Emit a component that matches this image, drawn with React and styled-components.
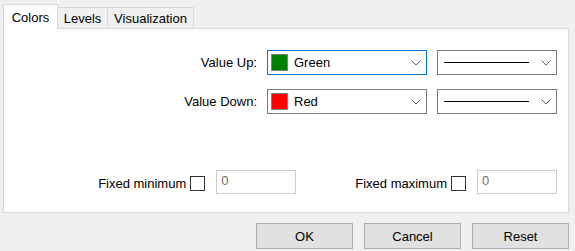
import React from "react";
import styled, { createGlobalStyle } from "styled-components";

const GlobalStyle = createGlobalStyle`
  body {
    margin: 0;
    background: #f0f0f0;
    font-family: "Liberation Sans", Arial, sans-serif;
    font-size: 13px;
    color: #000;
  }
`;

const Window = styled.div`
  width: 575px;
  height: 251px;
  box-sizing: border-box;
  padding: 4px 6px 0 3px;
  display: flex;
  flex-direction: column;
`;

const TabStrip = styled.div`
  display: flex;
  align-items: flex-end;
  height: 25px;
  margin-bottom: -1px;
`;

const Tab = styled.div`
  position: relative;
  width: ${(p) => p.$w}px;
  height: ${(p) => (p.$active ? 25 : 21)}px;
  margin-bottom: ${(p) => (p.$active ? 0 : 1)}px;
  margin-left: ${(p) => (p.$first ? 0 : -1)}px;
  box-sizing: border-box;
  border: 1px solid #d9d9d9;
  border-bottom: none;
  background: ${(p) => (p.$active ? "#fff" : "#f0f0f0")};
  z-index: ${(p) => (p.$active ? 1 : 0)};
  display: flex;
  justify-content: center;
  align-items: center;
  padding-top: ${(p) => (p.$active ? 0 : 1)}px;
`;

const Panel = styled.div`
  height: 185px;
  box-sizing: border-box;
  border: 1px solid #d9d9d9;
  background: #fff;
  padding: 21px 11px 18px 0;
  display: flex;
  flex-direction: column;
  justify-content: space-between;
`;

const ValueGrid = styled.div`
  display: grid;
  grid-template-columns: 1fr 160px 120px;
  grid-auto-rows: 25px;
  column-gap: 10px;
  row-gap: 14px;
  align-items: center;
`;

const Label = styled.div`
  text-align: right;
`;

const Combo = styled.div`
  height: 25px;
  box-sizing: border-box;
  border: 1px solid ${(p) => (p.$focused ? "#0078d7" : "#7a7a7a")};
  display: flex;
  align-items: center;
  padding: 0 5px 0 3px;
`;

const Swatch = styled.span`
  width: 17px;
  height: 17px;
  box-sizing: border-box;
  border: 1px solid #828282;
  background: ${(p) => p.$color};
  margin-right: 6px;
`;

const ComboText = styled.span`
  flex: 1;
`;

const LineSample = styled.span`
  flex: 1;
  height: 1px;
  background: #000;
  margin: 0 12px 0 3px;
`;

const Chevron = () => (
  <svg width="10" height="6" viewBox="0 0 10 6">
    <path d="M0.5 0.5 L5 5 L9.5 0.5" fill="none" stroke="#606060" strokeWidth="1" />
  </svg>
);

const BottomRow = styled.div`
  display: flex;
  justify-content: flex-end;
  align-items: center;
  gap: 59px;
`;

const FixedGroup = styled.div`
  display: flex;
  align-items: center;
`;

const FixedLabel = styled.span`
  padding-top: 3px;
`;

const CheckBox = styled.span`
  width: 15px;
  height: 15px;
  box-sizing: border-box;
  border: 1px solid #333;
  background: #fff;
  margin: 3px 11px 0 4px;
`;

const NumInput = styled.div`
  width: 80px;
  height: 24px;
  box-sizing: border-box;
  border: 1px solid #cccccc;
  color: #6d6d6d;
  padding: 2px 0 0 4px;
`;

const ButtonRow = styled.div`
  display: flex;
  justify-content: flex-end;
  gap: 11px;
  margin-top: 10px;
`;

const Button = styled.div`
  width: 97px;
  height: 26px;
  box-sizing: border-box;
  border: 1px solid #adadad;
  background: #e1e1e1;
  display: flex;
  align-items: center;
  justify-content: center;
`;

const rows = [
  { label: "Value Up:", name: "Green", color: "#008000", focused: true },
  { label: "Value Down:", name: "Red", color: "#ff0000" },
];

export default function App() {
  return (
    <Window>
      <GlobalStyle />
      <TabStrip>
        <Tab $w={55} $active $first>Colors</Tab>
        <Tab $w={51}>Levels</Tab>
        <Tab $w={87}>Visualization</Tab>
      </TabStrip>
      <Panel>
        <ValueGrid>
          {rows.map((r) => (
            <React.Fragment key={r.label}>
              <Label>{r.label}</Label>
              <Combo $focused={r.focused}>
                <Swatch $color={r.color} />
                <ComboText>{r.name}</ComboText>
                <Chevron />
              </Combo>
              <Combo>
                <LineSample />
                <Chevron />
              </Combo>
            </React.Fragment>
          ))}
        </ValueGrid>
        <BottomRow>
          <FixedGroup>
            <FixedLabel>Fixed minimum</FixedLabel>
            <CheckBox />
            <NumInput>0</NumInput>
          </FixedGroup>
          <FixedGroup>
            <FixedLabel>Fixed maximum</FixedLabel>
            <CheckBox />
            <NumInput>0</NumInput>
          </FixedGroup>
        </BottomRow>
      </Panel>
      <ButtonRow>
        <Button>OK</Button>
        <Button>Cancel</Button>
        <Button>Reset</Button>
      </ButtonRow>
    </Window>
  );
}
